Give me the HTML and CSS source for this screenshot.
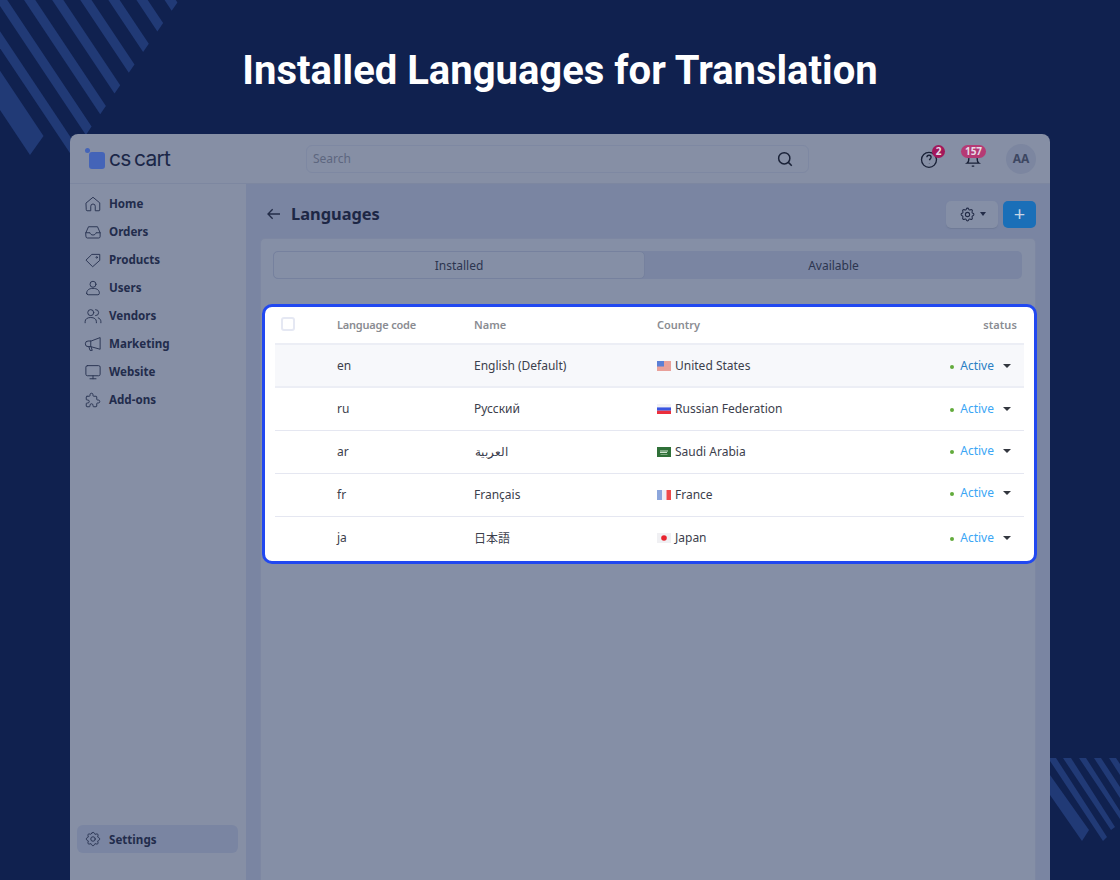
FILE: index.html
```html
<!DOCTYPE html>
<html lang="en">
<head>
    <meta charset="UTF-8">
    <meta name="viewport" content="width=device-width, initial-scale=1.0">
    <title>Installed Languages for Translation</title>
    <link rel="stylesheet" href="styles.css">
</head>
<body>
    <svg class="stripes-top" width="180" height="160" viewBox="0 0 180 160">
        <polygon points="43.5,136 30,155 -90,-25 -76.5,-44"/>
        <polygon points="77.3,147.3 71.6,155.6 -48.4,-24.4 -42.7,-32.7"/>
        <polygon points="91.6,126.6 85.9,134.9 -34.1,-45.1 -28.4,-53.4"/>
        <polygon points="105.9,105.9 100.2,114.2 -19.8,-65.8 -14.1,-74.1"/>
        <polygon points="120.2,85.2 114.5,93.5 -5.5,-86.5 0.2,-94.8"/>
        <polygon points="134.5,64.5 128.8,72.8 8.8,-107.2 14.5,-115.5"/>
        <polygon points="148.8,43.8 143.1,52.1 23.1,-127.9 28.8,-136.2"/>
        <polygon points="163.1,23.1 157.4,31.4 37.4,-148.6 43.1,-156.9"/>
        <polygon points="177.4,2.4 171.7,10.7 51.7,-169.3 57.4,-177.6"/>
    </svg>
    <svg class="stripes-bottom" width="70" height="90" viewBox="0 0 70 90">
        <polygon points="0,17 39,72 32,83 0,37"/>
        <polygon points="0,0 6,0 57,79 53,83 0,3"/>
        <polygon points="13,0 21,0 65,69 61,72"/>
        <polygon points="29,0 36,0 70,53 70,61"/>
        <polygon points="44,0 51,0 70,29 70,40"/>
        <polygon points="59,0 66,0 70,6 70,17"/>
    </svg>

    <h1 class="page-title">Installed Languages for Translation</h1>

    <div class="window">
        <header class="topbar">
            <div class="logo">
                <span class="logo-mark"></span>
                <span class="logo-text">cs cart</span>
            </div>
            <div class="search">
                <span>Search</span>
                <svg class="search-icon" width="18" height="18" viewBox="0 0 24 24"><circle cx="11" cy="11" r="7.5"/><path d="M16.5 16.5L21 21"/></svg>
            </div>
            <div class="topbar-icons">
                <div class="top-icon gauge">
                    <svg width="20" height="20" viewBox="0 0 24 24"><circle cx="12" cy="13" r="9"/><path d="M9.500 10a2.500 2.500 0 0 1 5 0c0 1.500-1.500 1.800-2 3.500M12.500 17v.5"/></svg>
                    <span class="badge badge-round">2</span>
                </div>
                <div class="top-icon bell">
                    <svg width="20" height="20" viewBox="0 0 24 24"><path d="M5 17c1.500-1 2-3 2-6a5 5 0 0 1 10 0c0 3 .5 5 2 6zM10.500 20.500h3"/></svg>
                    <span class="badge badge-wide">157</span>
                </div>
                <div class="avatar">AA</div>
            </div>
        </header>

        <div class="body-wrap">
            <nav class="sidebar">
                <ul class="nav-list">
                    <li>
                        <svg viewBox="0 0 24 24"><path d="M3 10.500l9-7.500 9 7.500V20a1 1 0 0 1-1 1h-5v-6a3 3 0 0 0-6 0v6H4a1 1 0 0 1-1-1z"/></svg>
                        Home
                    </li>
                    <li>
                        <svg viewBox="0 0 24 24"><path d="M2.500 13L6 5h12l3.500 8v5a2 2 0 0 1-2 2h-15a2 2 0 0 1-2-2zM2.500 13H8c.5 2 2 3 4 3s3.500-1 4-3h5.500"/></svg>
                        Orders
                    </li>
                    <li>
                        <svg viewBox="0 0 24 24"><path d="M11 4.500h10v8L11.500 21 3 12.500z"/><circle cx="17" cy="8.500" r="1"/></svg>
                        Products
                    </li>
                    <li>
                        <svg viewBox="0 0 24 24"><circle cx="12" cy="7" r="4"/><path d="M3.500 19c0-4 3-6.500 8.500-6.500s8.500 2.500 8.500 6.500a2 2 0 0 1-2 2h-13a2 2 0 0 1-2-2z"/></svg>
                        Users
                    </li>
                    <li>
                        <svg viewBox="0 0 24 24"><circle cx="9" cy="7.500" r="4"/><path d="M1.500 21v-1.500c0-3.500 3-5.500 7.500-5.500s7.500 2 7.500 5.500V21M15.500 3.500a4 4 0 0 1 0 8M19 14.500c2.200.8 3.500 2.500 3.500 5V21"/></svg>
                        Vendors
                    </li>
                    <li>
                        <svg viewBox="0 0 24 24"><path d="M21.500 4v15L9 15.500H5.500a3.500 3.500 0 0 1 0-7.500H9zM9 8v7.500M6.500 15.500l1.500 5h3l-1.500-4.500"/></svg>
                        Marketing
                    </li>
                    <li>
                        <svg viewBox="0 0 24 24"><rect x="2.500" y="3.500" width="19" height="13.500" rx="2"/><path d="M12 17v4M8 21h8"/></svg>
                        Website
                    </li>
                    <li>
                        <svg viewBox="0 0 24 24"><path d="M4 7h3a1 1 0 0 0 1-1V5a2 2 0 0 1 4 0v1a1 1 0 0 0 1 1h3a1 1 0 0 1 1 1v3a1 1 0 0 0 1 1h1a2 2 0 0 1 0 4h-1a1 1 0 0 0-1 1v3a1 1 0 0 1-1 1h-3a1 1 0 0 1-1-1v-1a2 2 0 0 0-4 0v1a1 1 0 0 1-1 1H4a1 1 0 0 1-1-1v-3a1 1 0 0 1 1-1h1a2 2 0 0 0 0-4H4a1 1 0 0 1-1-1V8a1 1 0 0 1 1-1"/></svg>
                        Add-ons
                    </li>
                </ul>
                <div class="nav-settings">
                    <svg viewBox="0 0 24 24"><path d="M10.325 4.317c.426-1.756 2.924-1.756 3.350 0a1.724 1.724 0 0 0 2.573 1.066c1.543-.94 3.310.826 2.370 2.370a1.724 1.724 0 0 0 1.065 2.572c1.756.426 1.756 2.924 0 3.350a1.724 1.724 0 0 0-1.066 2.573c.94 1.543-.826 3.310-2.370 2.370a1.724 1.724 0 0 0-2.572 1.065c-.426 1.756-2.924 1.756-3.350 0a1.724 1.724 0 0 0-2.573-1.066c-1.543.94-3.310-.826-2.370-2.370a1.724 1.724 0 0 0-1.065-2.572c-1.756-.426-1.756-2.924 0-3.350a1.724 1.724 0 0 0 1.066-2.573c-.94-1.543.826-3.310 2.370-2.370.996.608 2.296.07 2.572-1.065z"/><circle cx="12" cy="12" r="3"/></svg>
                    Settings
                </div>
            </nav>

            <main class="content">
                <div class="title-row">
                    <svg class="back-arrow" width="16" height="16" viewBox="0 0 24 24"><path d="M21 12H3M10 5l-7 7 7 7"/></svg>
                    <h2>Languages</h2>
                    <div class="title-actions">
                        <button class="btn-gear">
                            <svg width="17" height="17" viewBox="0 0 24 24"><path d="M10.325 4.317c.426-1.756 2.924-1.756 3.350 0a1.724 1.724 0 0 0 2.573 1.066c1.543-.94 3.310.826 2.370 2.370a1.724 1.724 0 0 0 1.065 2.572c1.756.426 1.756 2.924 0 3.350a1.724 1.724 0 0 0-1.066 2.573c.94 1.543-.826 3.310-2.370 2.370a1.724 1.724 0 0 0-2.572 1.065c-.426 1.756-2.924 1.756-3.350 0a1.724 1.724 0 0 0-2.573-1.066c-1.543.94-3.310-.826-2.370-2.370a1.724 1.724 0 0 0-1.065-2.572c-1.756-.426-1.756-2.924 0-3.350a1.724 1.724 0 0 0 1.066-2.573c-.94-1.543.826-3.310 2.370-2.370.996.608 2.296.07 2.572-1.065z"/><circle cx="12" cy="12" r="3"/></svg>
                            <span class="caret caret-gear"></span>
                        </button>
                        <button class="btn-add">+</button>
                    </div>
                </div>

                <section class="card">
                    <div class="tabs">
                        <div class="tab tab-active">Installed</div>
                        <div class="tab">Available</div>
                    </div>

                    <div class="highlight">
                        <table class="lang-table">
                            <thead>
                                <tr>
                                    <th class="col-check"><span class="checkbox"></span></th>
                                    <th class="col-code">Language code</th>
                                    <th class="col-name">Name</th>
                                    <th class="col-country">Country</th>
                                    <th class="col-status">status</th>
                                </tr>
                            </thead>
                            <tbody>
                                <tr class="row-hover">
                                    <td></td>
                                    <td>en</td>
                                    <td>English (Default)</td>
                                    <td><span class="country">
                                        <svg class="flag" viewBox="0 0 14 10"><rect width="14" height="10" fill="#f3d9d6"/><path d="M0 1h14M0 3h14M0 5h14M0 7h14M0 9h14" stroke="#e0685e" stroke-width="1"/><rect width="7" height="5.500" fill="#5b7fd6"/></svg>
                                        United States</span></td>
                                    <td class="status"><span class="dot"></span><a class="active-link">Active</a><span class="caret"></span></td>
                                </tr>
                                <tr>
                                    <td></td>
                                    <td>ru</td>
                                    <td>Русский</td>
                                    <td><span class="country">
                                        <svg class="flag" viewBox="0 0 14 10"><rect width="14" height="3.400" fill="#f1f1f5"/><rect y="3.400" width="14" height="3.300" fill="#3a55e0"/><rect y="6.700" width="14" height="3.300" fill="#ec2f3c"/></svg>
                                        Russian Federation</span></td>
                                    <td class="status"><span class="dot"></span><a class="active-link">Active</a><span class="caret"></span></td>
                                </tr>
                                <tr>
                                    <td></td>
                                    <td>ar</td>
                                    <td dir="rtl" class="cell-ar">العربية</td>
                                    <td><span class="country">
                                        <svg class="flag" viewBox="0 0 14 10"><rect width="14" height="10" fill="#2f7038"/><path d="M3 4h8M3 5.500h7" stroke="#cfe3cf" stroke-width="1"/><path d="M3.500 7.500h7" stroke="#a9cda9" stroke-width=".6"/></svg>
                                        Saudi Arabia</span></td>
                                    <td class="status status-up-1"><span class="dot"></span><a class="active-link">Active</a><span class="caret"></span></td>
                                </tr>
                                <tr>
                                    <td></td>
                                    <td>fr</td>
                                    <td>Français</td>
                                    <td><span class="country">
                                        <svg class="flag" viewBox="0 0 14 10"><rect width="5" height="10" fill="#8ca6dc"/><rect x="5" width="4.500" height="10" fill="#eef0f6"/><rect x="9.500" width="4.500" height="10" fill="#ee4a4a"/></svg>
                                        France</span></td>
                                    <td class="status status-up-2"><span class="dot"></span><a class="active-link">Active</a><span class="caret"></span></td>
                                </tr>
                                <tr>
                                    <td></td>
                                    <td>ja</td>
                                    <td>日本語</td>
                                    <td><span class="country">
                                        <svg class="flag" viewBox="0 0 14 10"><rect width="14" height="10" fill="#f0f0f3"/><circle cx="7" cy="5" r="2.800" fill="#e8232e"/></svg>
                                        Japan</span></td>
                                    <td class="status"><span class="dot"></span><a class="active-link">Active</a><span class="caret"></span></td>
                                </tr>
                            </tbody>
                        </table>
                    </div>
                </section>
            </main>
        </div>
    </div>
</body>
</html>
```

FILE: styles.css
```css
* {
    box-sizing: border-box;
}

html,
body {
    height: 880px;
}

body {
    margin: 0;
    position: relative;
    overflow: hidden;
    background: #10214f;
    font-family: "Noto Sans", "Noto Sans CJK JP", sans-serif;
    font-size: 12px;
    color: #1f2a4a;
}

/* decorative corners */
.stripes-top,
.stripes-bottom {
    position: absolute;
    fill: #213a76;
}

.stripes-top {
    left: 0;
    top: 0;
}

.stripes-bottom {
    left: 1050px;
    top: 758px;
}

.page-title {
    position: relative;
    margin: 0;
    height: 134px;
    padding-top: 47px;
    text-align: center;
    font-family: Roboto, sans-serif;
    font-size: 40px;
    line-height: 48px;
    font-weight: 700;
    color: #fff;
}

.window {
    position: relative;
    width: 980px;
    height: 746px;
    margin-left: 70px;
    display: flex;
    flex-direction: column;
    background: #868fa5;
    border-radius: 8px 8px 0 0;
    overflow: hidden;
}

/* top bar */
.topbar {
    display: flex;
    align-items: center;
    height: 50px;
    flex-shrink: 0;
    border-bottom: 1px solid #7d87a0;
    padding: 0 14px 0 15px;
}

.logo {
    position: relative;
    width: 221px;
    display: flex;
    align-items: center;
}

.logo-mark {
    width: 16px;
    height: 17px;
    margin: 3px 4px 0 4px;
    border-radius: 3px;
    background: #4464b8;
}

.logo-mark::before {
    content: "";
    position: absolute;
    left: 0;
    top: 1px;
    width: 5px;
    height: 5px;
    border-radius: 50%;
    background: #4464b8;
}

.logo-text {
    font-family: Inter, sans-serif;
    font-size: 21px;
    line-height: 24px;
    letter-spacing: -0.7px;
    word-spacing: -2px;
    color: #1b2748;
}

.search {
    width: 503px;
    height: 28px;
    display: flex;
    align-items: center;
    justify-content: space-between;
    padding: 0 14px 0 6px;
    border: 1px solid #7e88a2;
    border-radius: 6px;
    color: #5d667f;
}

.search-icon {
    fill: none;
    stroke: #1a2238;
    stroke-width: 2;
}

.topbar-icons {
    flex: 1;
    display: flex;
    align-items: center;
    justify-content: flex-end;
}

.top-icon {
    position: relative;
    height: 30px;
    display: flex;
    align-items: center;
    justify-content: center;
}

.top-icon svg {
    fill: none;
    stroke: #1a2238;
    stroke-width: 1.600;
}

.gauge {
    width: 20px;
    margin-right: 24px;
}

.bell {
    width: 20px;
    margin-right: 23px;
}

.badge {
    position: absolute;
    text-align: center;
    color: #e8dde6;
    font-weight: 700;
    font-size: 10px;
    line-height: 13px;
    height: 13px;
}

.badge-round {
    right: -6px;
    top: 1px;
    width: 13px;
    border-radius: 50%;
    background: #a3175a;
}

.badge-wide {
    left: -2px;
    top: 1px;
    width: 25px;
    border-radius: 7px;
    background: #b53a74;
}

.avatar {
    width: 30px;
    height: 30px;
    border-radius: 50%;
    background: #7c86a0;
    color: #3d4762;
    font-weight: 700;
    font-size: 12px;
    line-height: 30px;
    text-align: center;
}

/* sidebar */
.body-wrap {
    flex: 1;
    display: flex;
    min-height: 0;
}

.sidebar {
    width: 176px;
    flex-shrink: 0;
    display: flex;
    flex-direction: column;
    justify-content: space-between;
    padding: 6px 8px 27px 7px;
}

.nav-list {
    list-style: none;
    margin: 0;
    padding: 0;
}

.nav-list li,
.nav-settings {
    height: 28px;
    display: flex;
    align-items: center;
    gap: 7px;
    padding-left: 7px;
    font-weight: 700;
    font-size: 11.6px;
    color: #222c4c;
}

.nav-list li {
    padding-bottom: 1px;
}

.sidebar svg {
    width: 18px;
    height: 18px;
    fill: none;
    stroke: #2b3553;
    stroke-width: 1.300;
    stroke-linejoin: round;
    stroke-linecap: round;
}

.nav-settings {
    background: #7a85a2;
    border-radius: 6px;
}

/* main area */
.content {
    flex: 1;
    padding: 0 14px 0 14px;
    background: #7a85a2;
    display: flex;
    flex-direction: column;
}

.title-row {
    height: 54px;
    flex-shrink: 0;
    display: flex;
    align-items: center;
    padding: 14px 0 7px 6px;
}

.back-arrow {
    margin-bottom: 2px;
    fill: none;
    stroke: #232c48;
    stroke-width: 2;
}

.title-row h2 {
    margin: 0 0 2px 9px;
    font-size: 16.4px;
    font-weight: 700;
    color: #1d2745;
}

.title-actions {
    margin-left: auto;
    display: flex;
    gap: 5px;
    margin-bottom: 1px;
}

.title-actions button {
    height: 27px;
    border: none;
    border-radius: 5px;
    padding: 0;
}

.btn-gear {
    width: 52px;
    background: #858fa6;
    display: flex;
    align-items: center;
    justify-content: center;
    gap: 4px;
    box-shadow: 0 1px 1px #6f7a96;
}

.btn-gear svg {
    fill: none;
    stroke: #232c48;
    stroke-width: 1.500;
}

.btn-add {
    width: 33px;
    background: #1a6fb8;
    color: #c8d6e6;
    font-family: "Noto Sans", sans-serif;
    font-size: 20px;
    line-height: 26px;
}

.card {
    flex: 1;
    padding: 12px 13px 0 12px;
    background: #858fa6;
    border: 1px solid #7d87a2;
    border-bottom: none;
    border-radius: 5px 5px 0 0;
}

.tabs {
    display: flex;
    height: 28px;
    background: #7a85a2;
    border-radius: 5px;
}

.tab {
    flex: 1;
    text-align: center;
    line-height: 29px;
    color: #2c3550;
}

.tab-active {
    flex: 0 0 372px;
    background: #858fa6;
    border: 1px solid #76819e;
    border-radius: 5px;
    line-height: 27px;
}

/* the highlighted table */
.highlight {
    margin: 25px -15px 0 -11px;
    padding: 0 10px;
    background: #fff;
    border: 3px solid #2148f0;
    border-radius: 10px;
    height: 260px;
}

.lang-table {
    width: 100%;
    border-collapse: collapse;
    table-layout: fixed;
    color: #3c404c;
}

.lang-table th {
    height: 37px;
    padding: 0 0 2px;
    text-align: left;
    font-size: 11px;
    font-weight: 600;
    color: #8a8c92;
    border-bottom: 2px solid #eceef5;
}

.lang-table td {
    height: 43px;
    padding: 0;
    vertical-align: middle;
    border-bottom: 1px solid #e5e7f1;
}

.lang-table tbody tr:last-child td {
    border-bottom: none;
}

.col-check {
    width: 62px;
}

.lang-table th.col-code {
    width: 137px;
    letter-spacing: -0.2px;
}

.col-name {
    width: 183px;
}

.col-country {
    width: 230px;
}

.lang-table th.col-status {
    text-align: right;
    padding-right: 7px;
    letter-spacing: 0.1px;
}

.checkbox {
    display: block;
    width: 14px;
    height: 14px;
    margin-left: 6px;
    border: 2px solid #e5e8f3;
    border-radius: 3px;
}

.row-hover td {
    background: #f7f8fb;
    border-bottom-width: 2px;
    border-bottom-color: #eceef5;
}

.cell-ar {
    text-align: right;
    padding-right: 149px !important;
}

.country {
    display: flex;
    align-items: center;
    gap: 4px;
}

.flag {
    width: 14px;
    height: 10px;
    flex-shrink: 0;
}

.status {
    text-align: right;
    padding-right: 13px !important;
}

.status-up-1 {
    padding-bottom: 3px !important;
}

.status-up-2 {
    padding-bottom: 4px !important;
}

.dot {
    display: inline-block;
    width: 4px;
    height: 4px;
    margin-right: 6px;
    border-radius: 50%;
    background: #62ab3c;
    vertical-align: 1px;
}

.active-link {
    color: #3ba6f5;
}

.row-hover .active-link {
    color: #2a7fc4;
}

.caret {
    display: inline-block;
    width: 0;
    height: 0;
    margin-left: 9px;
    border-left: 4px solid transparent;
    border-right: 4px solid transparent;
    border-top: 4px solid #33373f;
    vertical-align: 2px;
}

.caret-gear {
    margin-left: 0;
    border-top-color: #232c48;
    border-left-width: 3.500px;
    border-right-width: 3.500px;
}
```
